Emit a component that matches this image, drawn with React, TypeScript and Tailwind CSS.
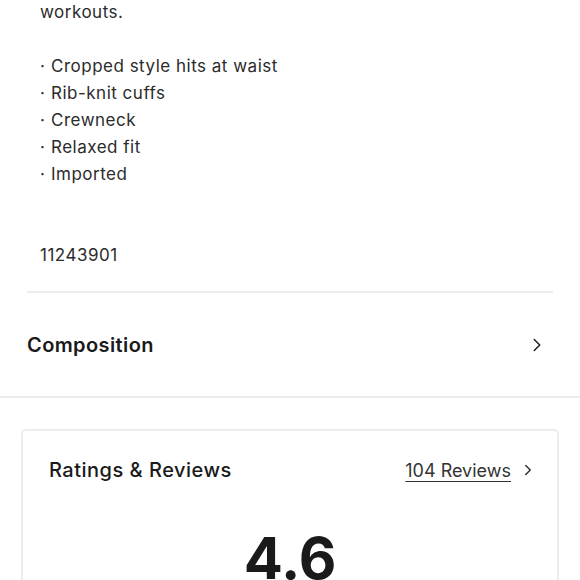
import { ChevronRight } from 'lucide-react'

const bullets = [
  'Cropped style hits at waist',
  'Rib-knit cuffs',
  'Crewneck',
  'Relaxed fit',
  'Imported',
]

function Description() {
  return (
    <div className="px-[27px]">
      <div className="-mt-[1px] pl-[13px] text-[17px] leading-[27px] text-[#2b2b2b] tracking-[0.5px]">
        <p>workouts.</p>
        <div className="h-[27px]" />
        <ul>
          {bullets.map((b) => (
            <li key={b} className="flex">
              <span className="w-[11px]">·</span>
              <span>{b}</span>
            </li>
          ))}
        </ul>
        <div className="h-[54px]" />
        <p>11243901</p>
      </div>
      <div className="mt-[22px] h-[2px] bg-[#ececec]" />
    </div>
  )
}

function CompositionRow() {
  return (
    <div className="flex h-[103px] items-center justify-between px-[27px]">
      <span className="text-[20px] font-semibold tracking-[0.4px] text-[#1a1a1a]">Composition</span>
      <ChevronRight className="mr-[5px] h-[22px] w-[22px] text-[#1a1a1a]" strokeWidth={1.6} />
    </div>
  )
}

function RatingsCard() {
  return (
    <div className="mx-[21px] mt-[31px] rounded-[5px] border-2 border-[#ececec] px-[26px] pt-[24px] pb-[40px]">
      <div className="-mr-[6px] flex items-center justify-between">
        <span className="text-[20px] font-medium tracking-[0.5px] text-[#1a1a1a]">Ratings &amp; Reviews</span>
        <div className="flex items-center gap-[8px] text-[#333]">
          <span className="text-[18px] underline underline-offset-[4px]">104 Reviews</span>
          <ChevronRight className="h-[18px] w-[18px]" strokeWidth={2} />
        </div>
      </div>
      <div className="mt-[44px] text-center text-[58px] font-bold leading-none text-[#1a1a1a]">4.6</div>
    </div>
  )
}

export default function App() {
  return (
    <div className="h-[580px] w-[580px] overflow-hidden bg-white" style={{ fontFamily: 'Inter, "Noto Sans", sans-serif' }}>
      <Description />
      <CompositionRow />
      <div className="h-[2px] bg-[#ececec]" />
      <RatingsCard />
    </div>
  )
}
